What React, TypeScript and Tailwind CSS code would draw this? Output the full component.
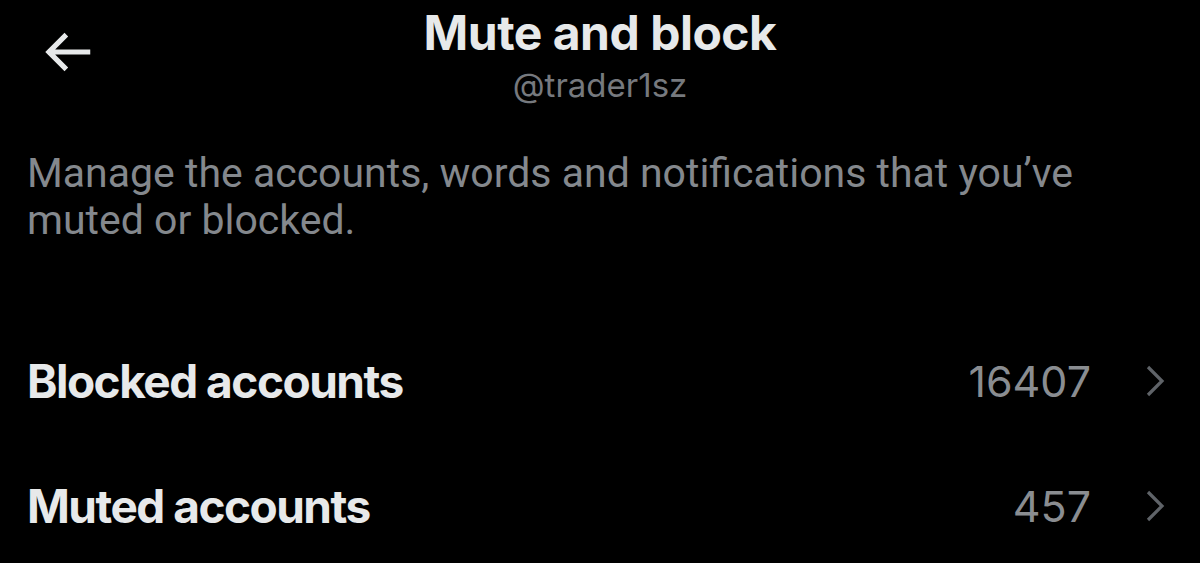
const rows = [
  { label: 'Blocked accounts', count: '16407' },
  { label: 'Muted accounts', count: '457' },
]

function BackArrow() {
  return (
    <svg viewBox="0 0 24 24" className="w-[62px] h-[62px] fill-[#e7e9ea]">
      <path d="M7.414 13l5.043 5.04-1.414 1.42L3.586 12l7.457-7.46 1.414 1.42L7.414 11H21v2H7.414z" />
    </svg>
  )
}

function Chevron() {
  return (
    <svg viewBox="0 0 24 32" className="w-[24px] h-[32px]" fill="none">
      <path d="M4 2l14 14L4 30" stroke="#5f6368" strokeWidth="3.2" />
    </svg>
  )
}

export default function App() {
  return (
    <div className="w-[1200px] h-[563px] overflow-hidden bg-black font-['Inter','Liberation_Sans',sans-serif]">
      {/* Header */}
      <div className="grid grid-cols-[1fr_auto_1fr] pt-[5px]">
        <div className="pl-[36px] pt-[16px]">
          <BackArrow />
        </div>
        <div className="flex flex-col items-center">
          <h1 className="text-[48px] leading-[56px] font-bold text-[#e7e9ea] tracking-[-0.5px]">
            Mute and block
          </h1>
          <p className="mt-[4px] text-[33px] leading-[40px] text-[#76797e]">@trader1sz</p>
        </div>
        <div />
      </div>

      {/* Description */}
      <p className="mt-[45px] pl-[27px] pr-[90px] font-['Roboto','Liberation_Sans',sans-serif] text-[41px] leading-[47px] text-[#84888d]">
        Manage the accounts, words and notifications that you’ve muted or blocked.
      </p>

      {/* Rows */}
      <div className="mt-[74px]">
        {rows.map((r) => (
          <div key={r.label} className="flex items-center h-[125px] pl-[27px] pr-[32px]">
            <span className="flex-1 text-[46px] leading-[56px] font-bold text-[#e7e9ea] tracking-[-1.5px]">
              {r.label}
            </span>
            <span className="text-[43px] leading-[56px] text-[#8a8d91]">{r.count}</span>
            <span className="ml-[53px]">
              <Chevron />
            </span>
          </div>
        ))}
      </div>
    </div>
  )
}
